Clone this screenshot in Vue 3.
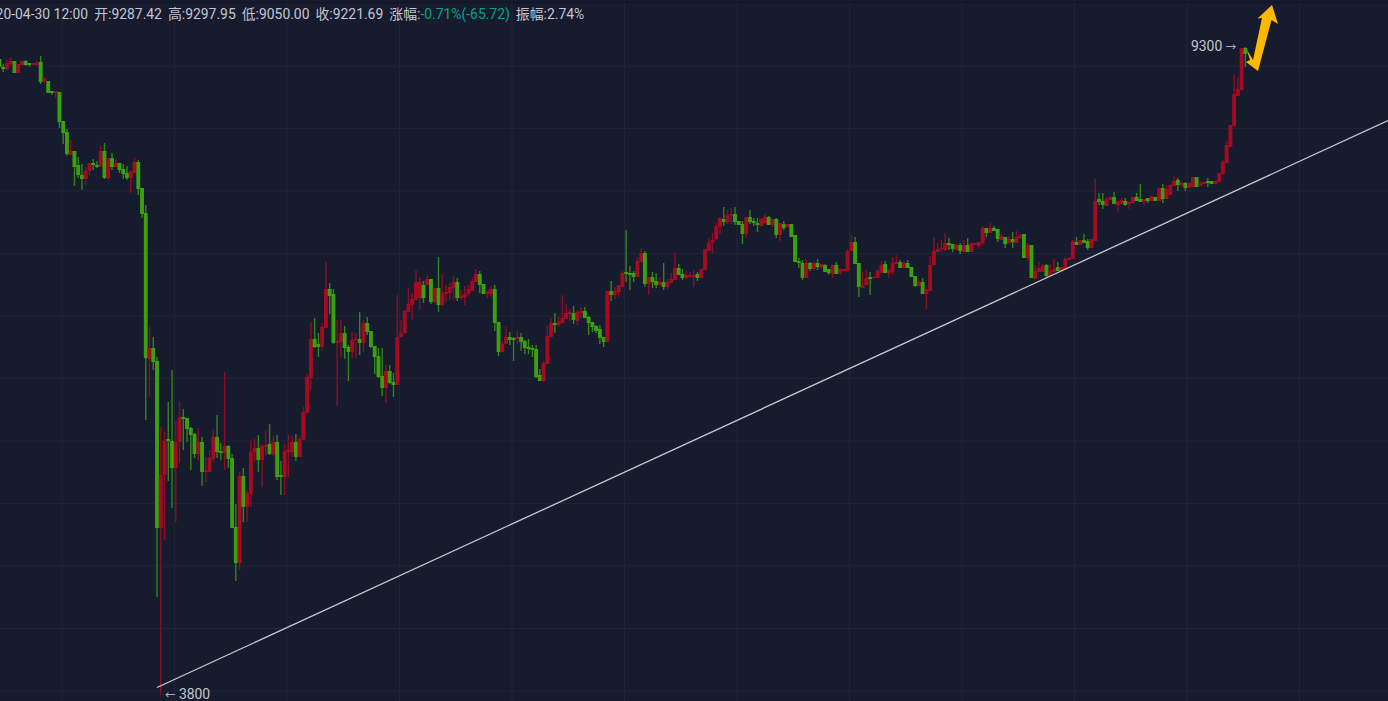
<script setup>
// candle data in chart pixels: colour top,bottom,wickTop,wickBottom
const raw = `
g59,67,59,67 g67,69,64,72 r63,69,60,70 r61,64,57,65 g61,73 r64,73 r61,65 g61,65,60,66 g63,65,63,67 r63,65 r63,65,61,65
g62,82,56,84 r79,81,77,83 g81,93 g91,93,91,95 r91,93,91,98 g92,122,92,128 g121,133,121,144 g132,154,129,156 r151,155,140,155 g151,167,151,186
g165,175,157,178 g175,179,164,190 r171,179,167,185 r163,171,163,175 g163,165,159,170 g165,167,161,168 r151,167,146,167 g151,178,143,179 r158,178,158,180 g158,167,153,170
r163,167,159,167 g163,170,163,173 g169,174,164,179 g173,178,166,180 r171,178,171,193 r162,173,158,173 g162,189,160,195 g188,214,188,218 g213,358,205,420
r348,359,327,397 g348,362,337,370 g361,528,357,597 r475,528,427,695 r441,475,432,540 g439,441,402,481 g441,468,370,508 r442,468,421,522 r417,442,402,463 g417,419,409,450
g418,429,418,442 g428,435,427,470 g434,454,433,458 r442,454,428,460 g442,472,437,486 r470,472,457,482 r458,472,450,462 r437,459,429,462 g437,452,415,458 g451,453,443,460
r446,453,372,470 g446,459,445,468 g458,528,454,528 g527,563,504,581 r476,563,472,570 g476,507,468,522 r493,507,490,522 r452,494,441,507 r448,452,439,462 g448,460,435,472
r446,460,444,487 r445,447,431,455 g444,454,424,455 r442,454,436,456 g442,477,435,480 g475,477,461,495 r451,477,444,495 r449,452,435,477 r442,452,436,457 g442,457,434,461
r439,457,436,457 r412,440,407,440 r377,413,374,413 r339,378,322,390 g339,347,318,348 g344,347,333,357 r327,347,323,350 r289,328,262,328 g289,296,283,314 g294,343,289,344
r341,343,320,406 r333,342,320,357 g333,348,326,359 g347,352,345,381 r340,352,332,358 r339,340,333,358 g339,343,312,355 r323,343,320,352 g323,332,317,335 g331,347,331,348
g346,357,346,374 g356,377,348,378 g376,388,348,396 r371,388,365,403 g371,383,365,384 g382,385,373,397 r337,385,295,385 r333,337,320,337 r311,333,310,333 r304,312,288,312
r299,305,293,320 r282,300,270,300 r282,298,277,310 g285,298,281,303 r279,285,275,285 g279,302,279,304 r288,302,288,303 g288,305,257,312 r293,305,274,306 r292,294,285,303
r287,293,283,300 r282,288,276,300 g282,298,278,301 r296,298,290,300 r294,297,286,305 r289,294,285,296 r281,291,279,291 r274,282,269,282 g274,285,271,293 g284,294,284,294
r291,294,291,298 r289,294,286,297 g289,323,285,331 g322,352,322,356 r344,352,341,352 r337,344,327,344 g337,340,332,345 g338,340,337,361 r337,339,331,344 g337,342,333,351
g341,348,340,354 g347,349,339,354 g348,350,345,357 g349,377,345,378 g375,381,369,381 r363,381,361,382 r336,364,326,364 r323,337,318,337 g323,325,313,333 r322,325,317,327
r318,323,295,323 r313,319,304,319 r312,314,309,322 g313,320,306,324 r312,321,310,325 r311,313,307,318 g311,318,307,318 g317,323,316,335 g322,327,322,332 g326,331,325,333
g329,338,325,344 g337,342,337,347 r291,342,291,342 g291,295,281,301 r291,295,287,299 r285,292,285,297 r273,287,271,287 g272,274,230,282 g273,275,266,290 g273,277,271,282
r261,277,257,277 r253,262,248,262 g253,284,251,287 r277,284,277,295 g277,282,272,288 g281,285,273,288 r282,285,277,286 g282,287,263,290 r282,287,279,289 r279,283,273,283
r268,280,253,280 g268,275,264,275 g274,278,269,280 r275,278,271,279 r275,277,272,278 r275,277,270,287 g274,278,272,281 r269,278,269,278 r249,270,249,270 r243,251,238,251
r240,243,233,253 r226,239,223,240 r218,227,217,234 g219,222,207,226 r215,222,210,224 r214,216,208,224 g214,222,207,225 g221,225,221,225 g224,234,221,244 r217,234,217,237
g217,222,210,224 g221,223,218,226 g223,225,218,232 r219,226,218,226 r217,223,214,224 g217,225,216,225 r219,225,219,227 g219,235,218,238 r223,235,223,241 g224,228,221,230
r224,227,224,227 g224,237,224,237 g235,262,235,262 g261,263,258,268 g263,278,260,280 r263,278,259,278 g263,269,262,271 r263,269,262,270 g263,267,259,270 r264,267,264,269
g265,272,264,272 g269,273,269,275 r265,274,265,278 g265,274,262,274 r269,273,268,275 r269,271,269,271 r251,271,249,271 r242,251,235,251 g242,264,237,264 g263,287,263,297
r285,288,272,288 r278,285,270,285 g277,279,272,295 r277,278,276,279 r271,278,269,278 r265,273,261,273 g264,273,261,273 r270,273,269,278 r263,272,257,275 r262,264,255,264
g262,268,260,268 r263,268,261,268 g263,268,260,268 g267,277,267,277 g276,286,276,287 r282,286,280,286 g282,294,278,294 r289,294,289,309 r265,291,256,291 r251,265,237,265
r249,252,243,252 r248,249,240,252 r243,250,233,251 g243,245,238,250 g244,249,244,252 r245,250,244,250 g245,251,243,254 r245,252,240,252 g245,252,238,252 r243,252,243,252
r243,245,243,245 r242,246,242,249 r228,243,226,245 g228,233,228,237 r228,233,223,233 g228,231,226,231 g229,239,229,242 r236,240,234,240 g237,244,237,248 r239,243,236,243
g239,242,232,248 r237,243,231,243 r235,238,234,238 g234,258,234,258 r245,258,243,261 g245,278,245,278 r271,279,265,279 r268,272,262,272 r266,272,264,272 g265,276,264,278
r271,276,264,276 r269,272,259,273 g267,271,262,271 r267,271,267,271 r259,269,257,269 r258,260,257,260 r241,259,240,259 g242,245,237,245 r240,245,240,245 g240,243,234,243
g241,248,239,250 r239,248,239,248 r201,241,179,241 g199,202,193,205 g201,205,193,209 r199,206,197,206 r197,200,197,200 g197,204,192,204 r201,205,201,212 r200,204,198,204
g201,205,198,206 r202,204,202,209 r197,203,197,203 g197,201,193,201 g199,202,184,202 r199,202,199,205 g198,201,198,203 r196,201,196,201 g197,201,197,201 r188,201,188,201
g188,199,184,203 r189,199,185,199 r185,195,184,195 r181,186,176,186 g180,185,178,191 r183,186,181,186 g183,188,182,191 r183,188,183,188 r177,187,177,187 g177,187,177,187
r183,186,182,186 r182,184,182,184 g181,183,178,187 g181,184,181,184 r181,184,181,184 r173,182,173,182 r162,174,160,174 r145,163,141,163 r125,147,125,147 r94,126,74,126
r89,96,77,96 r48,90,48,90 g48,54,47,67`

const candles = raw.trim().split(/\s+/).map((item, i) => {
  const [top, bottom, high, low] = item.slice(1).split(',').map(Number)
  return {
    up: item[0] === 'r',
    x: -0.6 + 3.753 * i,
    top,
    height: bottom - top,
    high: high ?? top,
    low: low ?? bottom,
  }
})

const columns = [62, 174.5, 287, 399.5, 512, 624.5, 737, 849.5, 962, 1074.5, 1187, 1299.5]
const rows = [66, 128.5, 191, 253.5, 316, 378.5, 441, 503.5, 566, 628.5, 691]

const stats = [
  { label: '开', value: '9287.42' },
  { label: '高', value: '9297.95' },
  { label: '低', value: '9050.00' },
  { label: '收', value: '9221.69' },
]
</script>

<template>
  <div class="chart">
    <svg class="plot" width="1388" height="701" viewBox="0 0 1388 701">
      <line class="edge" x1="0" y1="2.5" x2="1388" y2="2.5" />
      <line v-for="x in columns" :key="'c' + x" class="grid" :x1="x" y1="3" :x2="x" y2="701" />
      <line v-for="y in rows" :key="'r' + y" class="grid" x1="0" :y1="y" x2="1388" :y2="y" />

      <g v-for="(c, i) in candles" :key="i" :class="c.up ? 'up' : 'down'">
        <line class="wick" :x1="c.x" :y1="c.high" :x2="c.x" :y2="c.low" />
        <rect class="body" :x="c.x - 1.95" :y="c.top" width="3.9" :height="c.height" />
      </g>

      <line class="trend" x1="157" y1="687.5" x2="1388" y2="120.5" />
      <polygon
        class="pointer"
        points="1247,50 1253,60 1262,18 1257.5,18.5 1272,5 1278,24 1271.5,20 1258,71 1246,62 1250,60" />
    </svg>

    <div class="legend">
      <span class="time">2020-04-30 12:00</span>
      <span v-for="s in stats" :key="s.label">{{ s.label }}:{{ s.value }}</span>
      <span>涨幅:<em class="fall">-0.71%(-65.72)</em></span>
      <span>振幅:2.74%</span>
    </div>

    <span class="mark mark-high">9300 <i class="arrow">→</i></span>
    <span class="mark mark-low"><i class="arrow">←</i> 3800</span>
  </div>
</template>

<style scoped>
.chart {
  position: relative;
  width: 1388px;
  height: 701px;
  overflow: hidden;
  background: #171b2e;
  font-family: Roboto, "Noto Sans CJK SC", sans-serif;
  font-size: 13.9px;
  color: #c3c6d1;
}

.plot {
  display: block;
}

.edge {
  stroke: #12152a;
  stroke-width: 1.5;
}

.grid {
  stroke: #1f2436;
  stroke-width: 1;
}

.wick {
  stroke-width: 1.4;
}

.up .wick {
  stroke: #8e0c25;
}

.up .body {
  fill: #a50b20;
}

.down .wick {
  stroke: #30851a;
}

.down .body {
  fill: #3b9f0e;
}

.trend {
  stroke: #c8cacd;
  stroke-width: 1.3;
}

.pointer {
  fill: #ffb800;
}

.legend {
  position: absolute;
  top: 7px;
  left: -20px;
  display: flex;
  gap: 6px;
  line-height: 15px;
  white-space: nowrap;
}

.fall {
  font-style: normal;
  color: #03a57c;
}

.mark {
  position: absolute;
  line-height: 15px;
  white-space: nowrap;
}

.arrow {
  font-style: normal;
  font-size: 10.5px;
}

.mark-high {
  top: 39px;
  left: 1191px;
}

.mark-low {
  top: 687px;
  left: 165px;
}
</style>
